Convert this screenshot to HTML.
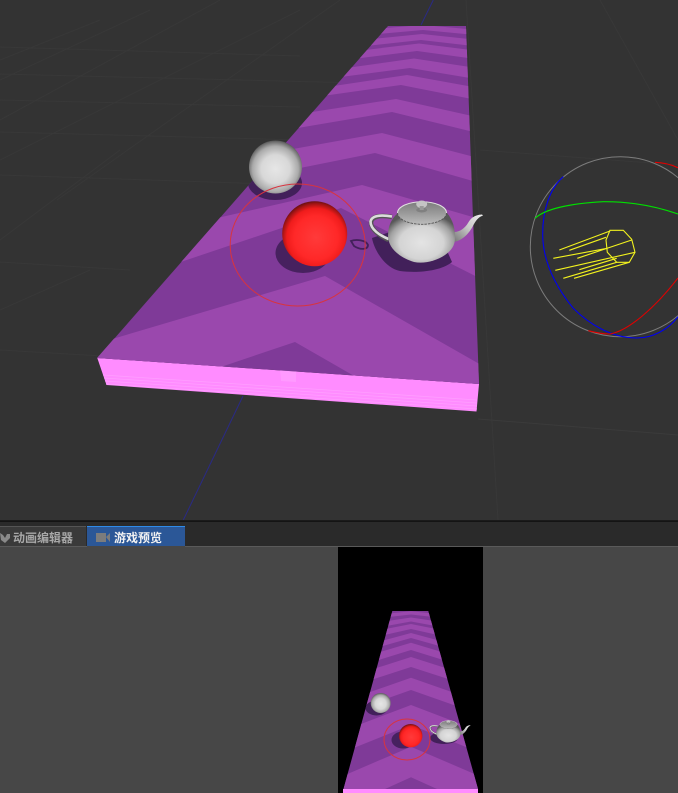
<!DOCTYPE html>
<html><head><meta charset="utf-8">
<style>
html,body{margin:0;padding:0;background:#333;}
#r{position:relative;width:678px;height:793px;overflow:hidden;background:#333;font-family:"Liberation Sans","Noto Sans CJK SC",sans-serif;}
svg{position:absolute;left:0;top:0;}
.t{position:absolute;top:530px;font-size:12px;font-weight:700;line-height:16px;white-space:nowrap;}
</style></head><body><div id="r">
<svg width="678" height="793" viewBox="0 0 678 793">
<defs>
<clipPath id="pl"><polygon points="388,26 466,26 479,384 97,358"/></clipPath>
<clipPath id="pp"><polygon points="392.3,611 428.3,611 478,789 343.5,789"/></clipPath>
<radialGradient id="gb" cx=".5" cy=".54" r=".54"><stop offset="0" stop-color="#e6e6e6"/><stop offset=".5" stop-color="#d8d8d8"/><stop offset=".8" stop-color="#aaa"/><stop offset=".95" stop-color="#6e6e6e"/><stop offset="1" stop-color="#555"/></radialGradient>
<radialGradient id="rb" cx=".52" cy=".56" r=".56"><stop offset="0" stop-color="#ff3a3a"/><stop offset=".6" stop-color="#ff2828"/><stop offset=".8" stop-color="#f01c1c"/><stop offset=".93" stop-color="#a01414"/><stop offset="1" stop-color="#6a1010"/></radialGradient>
<radialGradient id="tp" cx=".5" cy=".6" r=".6"><stop offset="0" stop-color="#e4e4e4"/><stop offset=".55" stop-color="#d4d4d4"/><stop offset=".8" stop-color="#a2a2a2"/><stop offset="1" stop-color="#585858"/></radialGradient>
<linearGradient id="lid" x1="0" y1="0" x2="0" y2="1"><stop offset="0" stop-color="#7c7c7c"/><stop offset=".5" stop-color="#9a9a9a"/><stop offset="1" stop-color="#bcbcbc"/></linearGradient>
<linearGradient id="sp" x1="0" y1="1" x2="1" y2="0"><stop offset="0" stop-color="#777"/><stop offset=".5" stop-color="#c8c8c8"/><stop offset="1" stop-color="#eee"/></linearGradient>
<g id="pot">
<path d="M392,217C381,215 372,216 371,222C371,230 380,236 388.500,240" fill="none" stroke="#555" stroke-width="4.500"/>
<path d="M392,216.500C381,214.500 371.500,215.500 370.500,221.500C370.500,229.500 380,235.500 388.500,239" fill="none" stroke="#dcdcdc" stroke-width="2.600"/>
<path d="M454,232C460,232 465,228 468,223C471,218 474,215 482,214.500L483,215.500C479,217 477,219 474,224C470,232 464,240 454,242Z" fill="url(#sp)"/>
<path d="M398,213C390,220 388,228 388,236C388,247 398,257 414,262C424,264 436,261 445,255C452,250 455,245 455,238C455,228 453,220 447,213Z" fill="url(#tp)"/>
<ellipse cx="422" cy="213" rx="24.500" ry="11.300" fill="url(#lid)"/>
<path d="M397.500,213A24.500,11.300 0 0 0 446.500,213" fill="none" stroke="#555" stroke-width=".9" stroke-dasharray="2.500 1"/>
<path d="M397.500,213A24.500,11.300 0 0 1 446.500,213" fill="none" stroke="#e0e0e0" stroke-width="1"/>
<ellipse cx="421.700" cy="210" rx="5.500" ry="2.500" fill="#808080"/>
<ellipse cx="421.700" cy="204.300" rx="5.500" ry="3.800" fill="#c4c4c4"/>
<rect x="419.700" y="206" width="4" height="4" fill="#999"/>
</g>
</defs>

<g stroke="#383838" stroke-width="1" fill="none">
<path d="M0,47L300,56M0,74L400,84M0,100L300,107M0,132L300,140M0,175L300,185M0,120L220,0M0,160L300,10M57,200L340,0M0,60L100,20M0,80L150,10"/>
<path d="M466,0L498,520M0,262L130,270M0,350L170,360"/>
<path d="M480,150L678,165M600,0L678,140M0,240L120,150M0,310L90,270"/>
</g>
<path d="M478,419L678,435" stroke="#3b3b3b" fill="none"/>
<path d="M433.300,0L421,25" stroke="#2a2a85" stroke-width="1" fill="none"/>
<path d="M243,396L183.300,520" stroke="#2a2a85" stroke-width="1" fill="none"/>

<!-- main plate -->
<polygon points="97.300,358 479,384 476.500,411.500 106.500,385" fill="#ff8cff"/>
<g stroke="#ff9eff" stroke-width=".8" fill="none">
<path d="M104,378L477,403M105,381L477,406M106,384L477,409M103,375L477,400"/>
</g>
<polygon points="280,370 296,371 296,382 281,381" fill="#ffa8ff" opacity=".5"/>
<polygon points="388,26 466,26 479,384 97.300,358" fill="#7f3a98"/>
<g clip-path="url(#pl)" fill="#9a48ad">
<polygon points="90,51.600 423,25 490,31 490,36.500 423,30 90,60"/>
<polygon points="90,67.200 422,34 490,41.300 490,48 421,40 90,76.400"/>
<polygon points="90,83 419,43.500 490,52.300 490,61 417,51 90,92"/>
<polygon points="90,104 414,58.500 490,70 490,81.300 410,68 90,109.600"/>
<polygon points="90,122.600 407,75 490,90 490,102.600 401,85 90,128.500"/>
<polygon points="90,146.400 396,99 490,120 490,136 392,112 90,163.300"/>
<polygon points="90,185.600 382,133 490,161 490,186 375,153 90,210"/>
<polygon points="90,247 362,185 490,222 490,283.500 341,208 90,292.600"/>
<polygon points="90,345.600 325,276 490,370 490,454 295,342 90,411"/>
<!-- shadows -->
<ellipse cx="275" cy="183" rx="27" ry="17" fill="#42205a"/>
<ellipse cx="303" cy="253" rx="27.500" ry="20" fill="#47215f"/>
<path d="M372,238C374,250 385,268 400,271C415,273 440,272 452,262L440,235L390,232Z" fill="#42205a"/>
<path d="M351,241C356,239 366,240 368,245C368,250 360,250 354,246Z" fill="none" stroke="#42205a" stroke-width="1.800"/>
</g>

<circle cx="275.500" cy="167" r="26.500" fill="url(#gb)"/>
<circle cx="314.700" cy="233.700" r="32.500" fill="url(#rb)"/>
<ellipse cx="297.700" cy="245" rx="67.500" ry="61" fill="none" stroke="#d8343f" stroke-width="1"/>
<use href="#pot"/>

<!-- gizmo -->
<circle cx="620.300" cy="246.700" r="90" fill="none" stroke="#7c7c7c" stroke-width="1"/>
<path fill="none" stroke="#0000f0" stroke-width="1.100" d="M563.300,176.700C549,189 542.500,212 542.700,235C543,262 556,287 573,308C590,325 612,338 637,338C652,338 668,330 678,316.700"/>
<path fill="none" stroke="#00e000" stroke-width="1.100" d="M535,218.300C545,209 570,203.500 603.300,201.700C630,201.500 655,206 678,214"/>
<path fill="none" stroke="#e00000" stroke-width="1.100" d="M588.300,330.700C597,333 604,334 610,334C628,331 655,308 678,278"/>
<path fill="none" stroke="#e00000" stroke-width="1.100" d="M655,162.300C663,162.500 671,164.500 678,167.700"/>
<g fill="none" stroke="#f2f21e" stroke-width="1.100">
<polygon points="610,230.300 623.300,230.300 631.700,239.300 635,252.300 629.300,262.300 616.700,262.300 607.300,252.300 606,240"/>
<path d="M559.300,250L610,231M569.300,250.300L606,237.300M577.300,258.300L631.700,240M553.300,258.300L607.300,248.300M555.300,270.300L635,252.300M579.300,269.700L616.700,258.300M563.300,278.300L616.700,262.300M574,278.300L629.300,262.300"/>
</g>

<!-- panel -->
<rect x="0" y="520" width="678" height="1" fill="#1a1a1a"/>
<rect x="0" y="521" width="678" height="1" fill="#141414"/>
<rect x="0" y="522" width="678" height="24" fill="#2a2a2a"/>
<rect x="0" y="526" width="86" height="20" fill="#3a3a3a"/>
<rect x="0" y="526" width="86" height="1" fill="#555"/>
<rect x="87" y="526" width="98" height="20" fill="#2b5797"/>
<rect x="87" y="526" width="98" height="1" fill="#2f8be8"/>
<rect x="0" y="546" width="678" height="247" fill="#474747"/>
<rect x="0" y="546" width="87" height="1" fill="#5a5a5a"/>
<rect x="185" y="546" width="493" height="1" fill="#5a5a5a"/>
<path d="M0,533L3,535L5,538L7,534L10,534L10,538L5,543L1,540Z" fill="#8a8a8a"/>
<rect x="96" y="533" width="10" height="9" fill="#7c7c7c"/>
<path d="M106,537L110,533V542Z" fill="#7c7c7c"/>

<!-- preview -->
<rect x="338" y="547" width="145" height="246" fill="#000"/>
<polygon points="392.300,611 428.300,611 478,789 343.500,789" fill="#7f3a98"/>
<g clip-path="url(#pp)" fill="#9a48ad">
<polygon points="340,618.400 411,611.300 482,618.400 482,622.500 411,614.500 340,622.500"/>
<polygon points="340,628 411,617.500 482,628 482,634.500 411,621.500 340,634.500"/>
<polygon points="340,638 411,624 482,638 482,645 411,629 340,645"/>
<polygon points="340,652.200 411,633 482,652.200 482,658 411,638 340,658"/>
<polygon points="340,664 411,642.700 482,664 482,672 411,650 340,672"/>
<polygon points="340,679.700 411,657 482,679.700 482,690 411,667 340,690"/>
<polygon points="340,702.600 411,677.700 482,702.600 482,715 411,690 340,715"/>
<polygon points="340,732 411,705 482,732 482,753.400 411,725 340,753.400"/>
<polygon points="340,777.200 411,746.700 482,777.200 482,809.300 411,777.300 340,809.300"/>
<ellipse cx="376.500" cy="708" rx="11" ry="7.500" fill="#42205a"/>
<ellipse cx="403" cy="740" rx="11.500" ry="8.500" fill="#47215f"/>
<ellipse cx="444" cy="738" rx="14" ry="6" fill="#42205a"/>
</g>
<rect x="343" y="789" width="135" height="4" fill="#ff8cff"/>
<circle cx="380.700" cy="703" r="10" fill="url(#gb)"/>
<circle cx="410.700" cy="735.700" r="11.700" fill="url(#rb)"/>
<ellipse cx="407" cy="739.500" rx="23" ry="20.500" fill="none" stroke="#d8343f" stroke-width="1"/>
<use href="#pot" transform="translate(296.600,648) scale(.36)"/>
</svg>
<div class="t" style="left:13px;color:#a8a8a8;">动画编辑器</div>
<div class="t" style="left:114px;color:#f2f2f2;">游戏预览</div>
</div></body></html>
